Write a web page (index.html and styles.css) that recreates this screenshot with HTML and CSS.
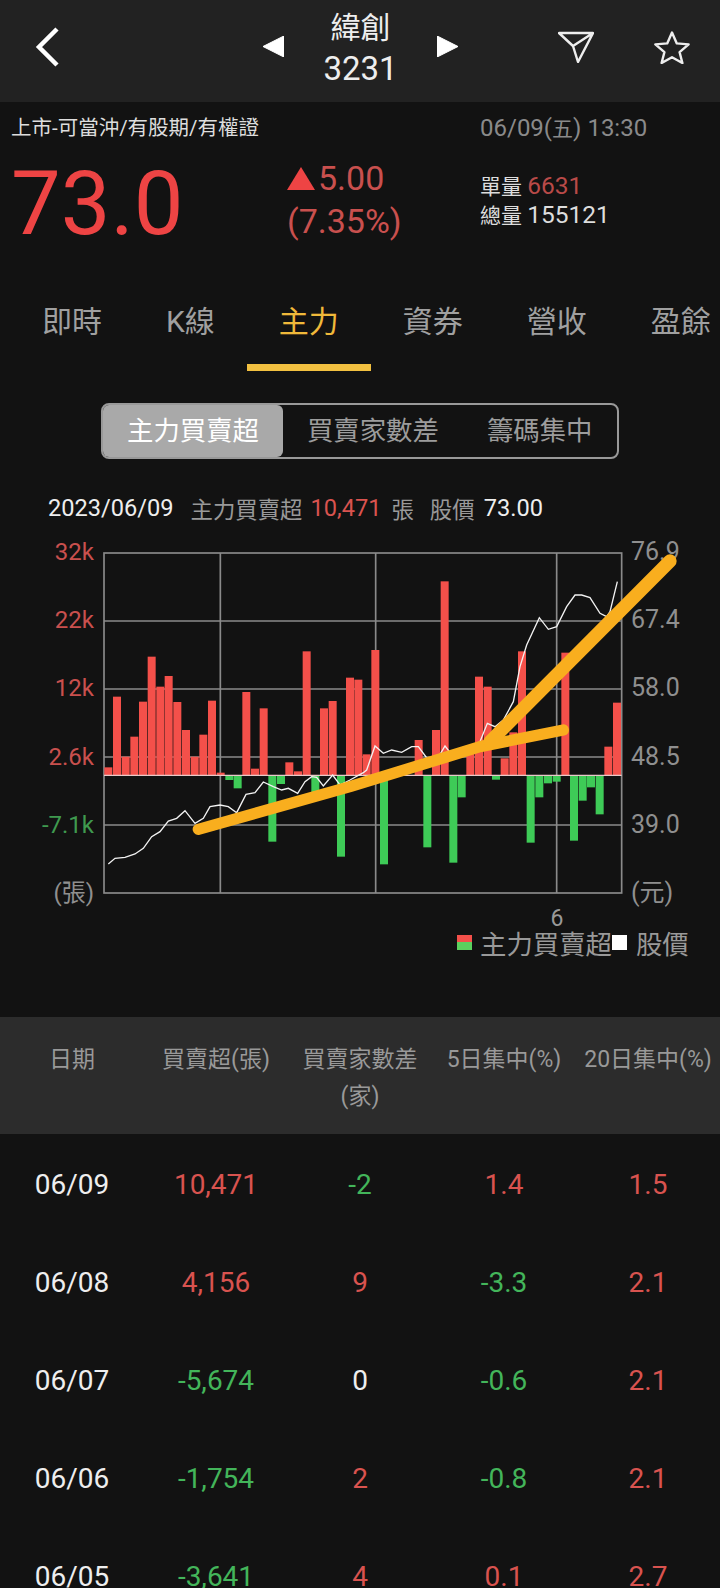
FILE: index.html
```html
<!DOCTYPE html>
<html lang="zh-Hant">
<head>
<meta charset="utf-8">
<title>緯創 3231</title>
<link rel="stylesheet" href="styles.css">
</head>
<body>
<div class="page">
  <header class="topbar">
    <svg class="back" viewBox="0 0 24 40"><path d="M22 2 L4 20 L22 38" /></svg>
    <div class="stock-nav">
      <svg class="arrow" viewBox="0 0 20 20"><path d="M20 0V20L0 10Z"/></svg>
      <div class="stock-name"><div class="name">緯創</div><div class="code">3231</div></div>
      <svg class="arrow" viewBox="0 0 20 20"><path d="M0 0V20L20 10Z"/></svg>
    </div>
    <div class="actions">
      <svg class="send" viewBox="0 0 36 32"><path d="M1 2 H35 L20 31 L15 15 Z M15 15 L35 2"/></svg>
      <svg class="star" viewBox="0 0 36 33"><path d="M18 1.5 L22.8 12.4 L34.6 13.4 L25.6 21.2 L28.4 32 L18 26.2 L7.6 32 L10.4 21.2 L1.4 13.4 L13.2 12.4 Z"/></svg>
    </div>
  </header>

  <section class="quote">
    <div class="quote-left">
      <div class="market">上市-可當沖/有股期/有權證</div>
      <div class="price">73.0</div>
    </div>
    <div class="change">
      <div class="change-val"><svg class="up" viewBox="0 0 28 23"><path d="M14 0 L28 23 H0 Z"/></svg>5.00</div>
      <div class="change-pct">(7.35%)</div>
    </div>
    <div class="quote-right">
      <div class="time">06/09(<span class="time-cjk">五</span>) 13:30</div>
      <div class="vol vol-first">單量 <span class="red-dim">6631</span></div>
      <div class="vol">總量 <span>155121</span></div>
    </div>
  </section>

  <nav class="tabs">
    <div class="tab">即時</div>
    <div class="tab">K線</div>
    <div class="tab active">主力</div>
    <div class="tab">資券</div>
    <div class="tab">營收</div>
    <div class="tab">盈餘</div>
  </nav>

  <div class="segment">
    <div class="seg seg-on">主力買賣超</div>
    <div class="seg">買賣家數差</div>
    <div class="seg">籌碼集中</div>
  </div>

  <div class="info">
    <span class="w">2023/06/09</span>
    <span class="g lead">主力買賣超</span>
    <span class="r">10,471</span>
    <span class="g">張</span>
    <span class="g lead2">股價</span>
    <span class="w">73.00</span>
  </div>

  <div class="chart">
    <div class="axis axis-l">
      <span class="r">32k</span><span class="r">22k</span><span class="r">12k</span><span class="r">2.6k</span><span class="gr">-7.1k</span><span class="g">(張)</span>
    </div>
    <svg class="plot" viewBox="300 54 1575 1050">
      <g class="grid">
        <rect x="312" y="69" width="1553" height="1020"/>
        <path d="M312 273H1865M312 477H1865M312 681H1865M312 885H1865M661 69V1089M1127 69V1089M1670 69V1089"/>
      </g>
      <g class="bars-red">
        <rect x="313" y="712" width="24" height="24"/><rect x="339" y="500" width="24" height="236"/><rect x="365" y="680" width="24" height="56"/><rect x="391" y="620" width="24" height="116"/><rect x="417" y="515" width="24" height="221"/><rect x="443" y="380" width="24" height="356"/><rect x="469" y="470" width="24" height="266"/><rect x="494" y="438" width="24" height="298"/><rect x="520" y="516" width="24" height="220"/><rect x="546" y="600" width="24" height="136"/><rect x="572" y="680" width="24" height="56"/><rect x="598" y="614" width="24" height="122"/><rect x="624" y="512" width="24" height="224"/><rect x="650" y="728" width="24" height="8"/>
        <rect x="727" y="486" width="24" height="250"/><rect x="753" y="716" width="24" height="20"/><rect x="779" y="535" width="24" height="201"/><rect x="856" y="697" width="24" height="39"/><rect x="882" y="724" width="24" height="12"/><rect x="908" y="364" width="24" height="372"/><rect x="960" y="535" width="24" height="201"/><rect x="986" y="513" width="24" height="223"/><rect x="1038" y="443" width="24" height="293"/><rect x="1063" y="449" width="24" height="287"/><rect x="1088" y="673" width="24" height="63"/><rect x="1114" y="360" width="24" height="376"/>
        <rect x="1192" y="710" width="24" height="26"/><rect x="1244" y="630" width="24" height="106"/><rect x="1296" y="600" width="24" height="136"/><rect x="1322" y="154" width="24" height="582"/><rect x="1399" y="660" width="24" height="76"/><rect x="1425" y="440" width="24" height="296"/><rect x="1451" y="470" width="24" height="266"/><rect x="1502" y="685" width="24" height="51"/><rect x="1528" y="607" width="24" height="129"/><rect x="1554" y="364" width="24" height="372"/><rect x="1684" y="368" width="24" height="368"/><rect x="1813" y="650" width="24" height="86"/><rect x="1839" y="518" width="24" height="218"/>
      </g>
      <g class="bars-green">
        <rect x="676" y="736" width="24" height="14"/><rect x="701" y="736" width="24" height="39"/><rect x="805" y="736" width="24" height="199"/><rect x="831" y="736" width="24" height="26"/><rect x="934" y="736" width="24" height="74"/><rect x="1011" y="736" width="24" height="244"/>
        <rect x="1140" y="736" width="24" height="267"/><rect x="1270" y="736" width="24" height="216"/><rect x="1348" y="736" width="24" height="262"/><rect x="1373" y="736" width="24" height="66"/><rect x="1476" y="736" width="24" height="13"/><rect x="1580" y="736" width="24" height="202"/><rect x="1606" y="736" width="24" height="66"/><rect x="1632" y="736" width="24" height="24"/><rect x="1658" y="736" width="24" height="19"/><rect x="1710" y="736" width="24" height="196"/><rect x="1736" y="736" width="24" height="76"/><rect x="1761" y="736" width="24" height="36"/><rect x="1787" y="736" width="24" height="117"/>
      </g>
      <path class="zero" d="M312 736H1865"/>
      <polyline class="price-line" points="325,1002 345,985 375,982 405,972 430,955 455,920 480,905 505,873 530,865 555,842 585,880 610,865 630,830 660,825 685,830 710,848 738,793 765,788 790,756 820,770 845,780 865,775 893,790 915,755 935,740 950,742 970,768 998,735 1020,765 1050,750 1090,728 1100,720 1125,648 1150,670 1175,660 1205,667 1235,650 1255,650 1285,690 1310,690 1335,648 1360,680 1385,680 1420,650 1440,635 1462,580 1485,590 1510,570 1540,515 1560,410 1580,345 1618,263 1645,298 1670,290 1700,230 1725,195 1745,195 1770,203 1800,250 1820,260 1830,245 1852,155"/>
      <polyline class="mark" points="595,898 1050,770 1440,650 1690,600"/>
      <polyline class="mark mark-wide" points="1470,635 2010,93"/>
    </svg>
    <div class="axis axis-r">
      <span>76.9</span><span>67.4</span><span>58.0</span><span>48.5</span><span>39.0</span><span>(元)</span>
    </div>
  </div>

  <div class="xlabel">6</div>
  <div class="legend">
    <i class="sw sw-mix"></i><span class="lg-a">主力買賣超</span><i class="sw sw-white"></i><span class="lg-b">股價</span>
  </div>

  <div class="thead">
    <div>日期</div><div>買賣超(張)</div><div>買賣家數差<br>(家)</div><div>5日集中(%)</div><div>20日集中(%)</div>
  </div>

  <div class="rows">
    <div class="row"><div class="w">06/09</div><div class="r">10,471</div><div class="gr">-2</div><div class="r">1.4</div><div class="r">1.5</div></div>
    <div class="row"><div class="w">06/08</div><div class="r">4,156</div><div class="r">9</div><div class="gr">-3.3</div><div class="r">2.1</div></div>
    <div class="row"><div class="w">06/07</div><div class="gr">-5,674</div><div class="w">0</div><div class="gr">-0.6</div><div class="r">2.1</div></div>
    <div class="row"><div class="w">06/06</div><div class="gr">-1,754</div><div class="r">2</div><div class="gr">-0.8</div><div class="r">2.1</div></div>
    <div class="row"><div class="w">06/05</div><div class="gr">-3,641</div><div class="r">4</div><div class="r">0.1</div><div class="r">2.7</div></div>
  </div>
</div>
</body>
</html>
```
FILE: styles.css
```css
* { box-sizing: border-box; }
html, body { margin: 0; padding: 0; background: #121212; }
body { font-family: Roboto, "Noto Sans CJK TC", sans-serif; color: #eee; }
.page { width: 720px; height: 1588px; overflow: hidden; background: #121212; }

.topbar { height: 102px; background: #222; display: flex; align-items: flex-start; padding: 0 30px 0 35px; }
.back { width: 24px; height: 40px; margin-top: 27px; fill: none; stroke: #fff; stroke-width: 4.5; }
.stock-nav { display: flex; align-items: center; margin-left: 204px; width: 195px; justify-content: space-between; height: 93px; }
.arrow { width: 21px; height: 21px; fill: #fff; stroke: #fff; stroke-width: 1; stroke-linejoin: round; }
.stock-name { text-align: center; align-self: flex-start; padding-top: 8px; }
.name { font-size: 30px; line-height: 39px; }
.code { font-size: 33px; line-height: 44px; }
.actions { display: flex; margin-left: auto; gap: 60px; margin-top: 31px; }
.send { width: 36px; height: 32px; fill: none; stroke: #eee; stroke-width: 2.4; stroke-linejoin: round; }
.star { width: 36px; height: 33px; fill: none; stroke: #eee; stroke-width: 2.4; stroke-linejoin: round; }

.quote { display: flex; height: 144px; }
.quote-left { width: 287px; padding-left: 11px; }
.market { font-size: 20.5px; line-height: 24px; margin-top: 14px; color: #ddd; white-space: nowrap; }
.price { font-size: 88.5px; line-height: 88px; margin-top: 20px; color: #ee4444; }
.change { width: 193px; padding-top: 60px; color: #c9504e; font-size: 34px; }
.change-val { line-height: 32px; display: flex; align-items: center; gap: 3px; }
.up { width: 28px; height: 23px; fill: #ee4444; }
.change-pct { line-height: 40px; margin-top: 7px; }
.quote-right { flex: 1; }
.time { font-size: 24px; line-height: 24px; margin-top: 14px; color: #8a8a8a; white-space: nowrap; }
.time-cjk { font-size: 21px; }
.vol { font-size: 21px; line-height: 29px; height: 29px; color: #ddd; }
.vol-first { margin-top: 30px; }
.vol span { font-size: 24.5px; }
.vol .red-dim { color: #b94a48; }

.tabs { display: flex; padding: 54px 0 0 10px; height: 125px; width: 720px; overflow: hidden; }
.tab { flex: none; font-size: 30px; line-height: 44px; height: 71px; padding: 0 32px; color: #a0a0a0; }
.tab.active { color: #f0b93a; border-bottom: 7px solid #f2c040; }

.segment { display: flex; width: 518px; height: 56px; margin: 32px 0 0 101px; border: 2px solid #999; border-radius: 8px; overflow: hidden; }
.seg { font-size: 26.4px; line-height: 52px; padding: 0 24px; color: #9c9c9c; white-space: nowrap; }
.seg-on { background: #a9a9a9; color: #fff; border-radius: 0 6px 6px 0; }

.info { display: flex; align-items: center; height: 32px; margin: 33px 0 0 48px; font-size: 23.6px; white-space: nowrap; }
.info .g { font-size: 22.4px; margin-left: 10px; }
.info .lead { margin-left: 17px; }
.info .lead2 { margin-left: 16px; }
.info .r { margin-left: 8px; }
.info .w { margin-left: 9px; }
.info .w:first-child { margin-left: 0; }
.w { color: #eee; }
.g { color: #999; }
.r { color: #d9534f; }
.gr { color: #43b55a; }

.chart { display: flex; margin-top: 14px; height: 365px; align-items: flex-start; }
.axis { display: flex; flex-direction: column; justify-content: space-between; height: 369px; line-height: 28px; color: #8f8f8f; flex: none; }
.axis-l { width: 94px; text-align: right; font-size: 24px; }
.axis-r { padding-left: 6px; font-size: 25px; }
.axis-l .r { color: #c9504e; }
.axis-l .gr { color: #3f9a4f; }
.axis-l .g { color: #8f8f8f; }
.plot { width: 525px; height: 350px; margin: 10px 0 0 6px; flex: none; overflow: visible; position: relative; z-index: 1; }
.grid rect, .grid path { fill: none; stroke: #8a8a8a; stroke-width: 5; }
.bars-red rect { fill: #f4504a; }
.bars-green rect { fill: #3ecb57; }
.zero { stroke: #e9c9c9; stroke-width: 4; fill: none; }
.price-line { fill: none; stroke: #f2f2f2; stroke-width: 4; }
.mark { fill: none; stroke: #f9ae1e; stroke-width: 34; stroke-linecap: round; stroke-linejoin: round; }
.mark-wide { stroke-width: 40; }

.xlabel { width: 114px; margin: 3px 0 0 500px; text-align: center; font-size: 23px; line-height: 26px; color: #999; }
.legend { display: flex; align-items: center; height: 24px; margin: -2px 0 0 457px; font-size: 26.4px; color: #999; white-space: nowrap; }
.sw { display: block; width: 15px; height: 15px; flex: none; }
.sw-mix { background: linear-gradient(#f4504a 50%, #5bd05e 50%); }
.sw-white { background: #fff; }
.lg-a { margin-left: 8px; }
.lg-b { margin-left: 9px; }

.thead { display: grid; grid-template-columns: repeat(5, 144px); height: 117px; margin-top: 63px; padding-top: 24px; background: #2c2c2c; font-size: 23px; line-height: 37px; color: #999; text-align: center; white-space: nowrap; }

.rows { padding-top: 2px; }
.row { display: grid; grid-template-columns: repeat(5, 144px); height: 97.9px; align-items: center; text-align: center; font-size: 28px; line-height: 24px; }
```
